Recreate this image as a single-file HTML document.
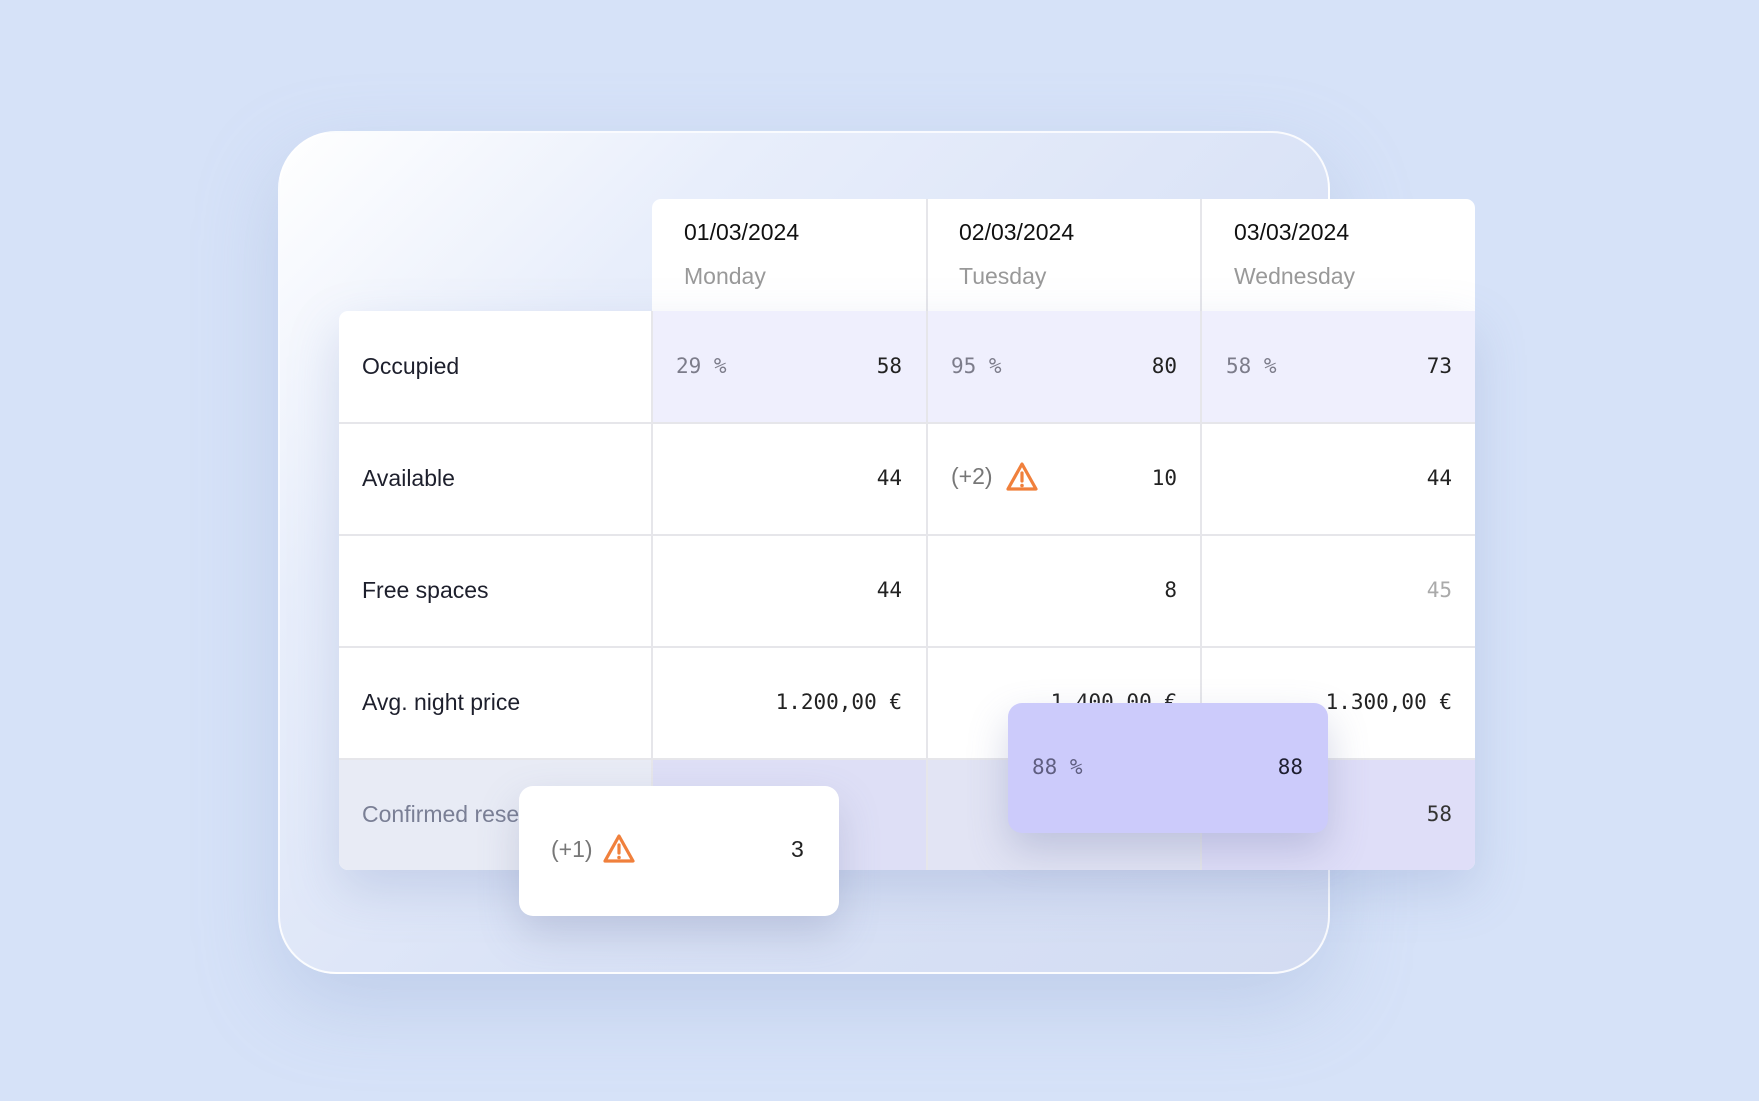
<!DOCTYPE html>
<html><head><meta charset="utf-8"><style>
*{margin:0;padding:0;box-sizing:border-box}
body{width:1759px;height:1101px;overflow:hidden;background:#d6e2f8;font-family:"Liberation Sans",sans-serif;position:relative}
.card{position:absolute;left:278px;top:131px;width:1052px;height:843px;border-radius:58px;background:linear-gradient(135deg,#ffffff 0%,#e8eefb 25%,#d9e2f6 60%,#d3dcf2 100%);border:2px solid rgba(255,255,255,.85);box-shadow:0 30px 80px rgba(150,170,210,.35)}
.abs{position:absolute}
.hdr{left:652px;top:199px;width:823px;height:112px;background:#fff;border-radius:9px 9px 0 0}
.tbl{left:339px;top:311px;width:1136px;height:559px;background:#fff;border-radius:9px 0 9px 9px;box-shadow:0 20px 50px rgba(120,140,190,.25);overflow:hidden}
.vl{position:absolute;width:2px;background:#e6e6ea}
.hl{position:absolute;height:2px;background:#e6e6ea}
.date{position:absolute;font-size:23px;color:#111}
.day{position:absolute;font-size:23px;color:#999}
.lab{position:absolute;font-size:23px;color:#1d1f2c;font-weight:500}
.num{position:absolute;font-family:"DejaVu Sans Mono","Liberation Mono",monospace;font-size:21px;color:#222;text-align:right}
.pct{position:absolute;font-family:"DejaVu Sans Mono","Liberation Mono",monospace;font-size:21px;color:#7c7c8a}
.paren{position:absolute;font-family:"Liberation Sans",sans-serif;font-size:23px;color:#777}
</style></head><body>
<div class="card"></div>
<div class="abs hdr"></div>
<div class="date" style="left:684px;top:219px">01/03/2024</div>
<div class="day" style="left:684px;top:263px">Monday</div>
<div class="date" style="left:959px;top:219px">02/03/2024</div>
<div class="day" style="left:959px;top:263px">Tuesday</div>
<div class="date" style="left:1234px;top:219px">03/03/2024</div>
<div class="day" style="left:1234px;top:263px">Wednesday</div>
<div class="vl" style="left:926px;top:199px;height:112px"></div>
<div class="vl" style="left:1200px;top:199px;height:112px"></div>

<div class="abs tbl">
 <div class="abs" style="left:313px;top:0;width:823px;height:112px;background:#efeffd"></div>
 <div class="abs" style="left:0;top:448px;width:1136px;height:111px;background:#e8ebf5"></div>
 <div class="abs" style="left:313px;top:448px;width:274px;height:111px;background:#dedff6"></div>
 <div class="abs" style="left:587px;top:448px;width:274px;height:111px;background:#e2e4f4"></div>
 <div class="abs" style="left:861px;top:448px;width:275px;height:111px;background:#dfdef8"></div>
 <div class="vl" style="left:312px;top:0;height:559px"></div>
 <div class="vl" style="left:587px;top:0;height:559px"></div>
 <div class="vl" style="left:861px;top:0;height:559px"></div>
 <div class="hl" style="left:0;top:111px;width:1136px"></div>
 <div class="hl" style="left:0;top:223px;width:1136px"></div>
 <div class="hl" style="left:0;top:335px;width:1136px"></div>
 <div class="hl" style="left:0;top:447px;width:1136px"></div>
</div>

<div class="lab" style="left:362px;top:353px">Occupied</div>
<div class="lab" style="left:362px;top:465px">Available</div>
<div class="lab" style="left:362px;top:577px">Free spaces</div>
<div class="lab" style="left:362px;top:689px">Avg. night price</div>
<div class="lab" style="left:362px;top:801px;color:#7a7f95">Confirmed reservations</div>

<div class="pct" style="left:676px;top:354px">29 %</div><div class="num" style="right:857px;top:354px">58</div>
<div class="pct" style="left:951px;top:354px">95 %</div><div class="num" style="right:582px;top:354px">80</div>
<div class="pct" style="left:1226px;top:354px">58 %</div><div class="num" style="right:307px;top:354px">73</div>

<div class="num" style="right:857px;top:466px">44</div>
<div class="paren" style="left:951px;top:463px">(+2)</div>
<svg class="abs" style="left:1005px;top:461px" width="34" height="32" viewBox="0 0 34 32"><path d="M17 3 L31 28 H3 Z" fill="none" stroke="#f0803c" stroke-width="3.2" stroke-linejoin="round"/><path d="M17 12 V20" stroke="#f0803c" stroke-width="3.2" stroke-linecap="round"/><circle cx="17" cy="24.5" r="1.8" fill="#f0803c"/></svg>
<div class="num" style="right:582px;top:466px">10</div>
<div class="num" style="right:307px;top:466px">44</div>

<div class="num" style="right:857px;top:578px">44</div>
<div class="num" style="right:582px;top:578px">8</div>
<div class="num" style="right:307px;top:578px;color:#aaa">45</div>

<div class="num" style="right:857px;top:690px">1.200,00 €</div>
<div class="num" style="right:582px;top:690px">1.400,00 €</div>
<div class="num" style="right:307px;top:690px">1.300,00 €</div>

<div class="num" style="right:307px;top:802px;color:#333">58</div>

<div class="abs" style="left:519px;top:786px;width:320px;height:130px;background:#fff;border-radius:14px;box-shadow:0 18px 40px rgba(110,120,160,.25)"></div>
<div class="paren" style="left:551px;top:836px">(+1)</div>
<svg class="abs" style="left:602px;top:833px" width="34" height="32" viewBox="0 0 34 32"><path d="M17 3 L31 28 H3 Z" fill="none" stroke="#f0803c" stroke-width="3.2" stroke-linejoin="round"/><path d="M17 12 V20" stroke="#f0803c" stroke-width="3.2" stroke-linecap="round"/><circle cx="17" cy="24.5" r="1.8" fill="#f0803c"/></svg>
<div class="paren" style="left:791px;top:836px;color:#222">3</div>

<div class="abs" style="left:1008px;top:703px;width:320px;height:130px;background:#cccbfb;border-radius:14px;box-shadow:0 18px 40px rgba(110,120,170,.3)"></div>
<div class="pct" style="left:1032px;top:755px;color:#5f5e80">88 %</div>
<div class="num" style="right:456px;top:755px;color:#1e1e30">88</div>
</body></html>
